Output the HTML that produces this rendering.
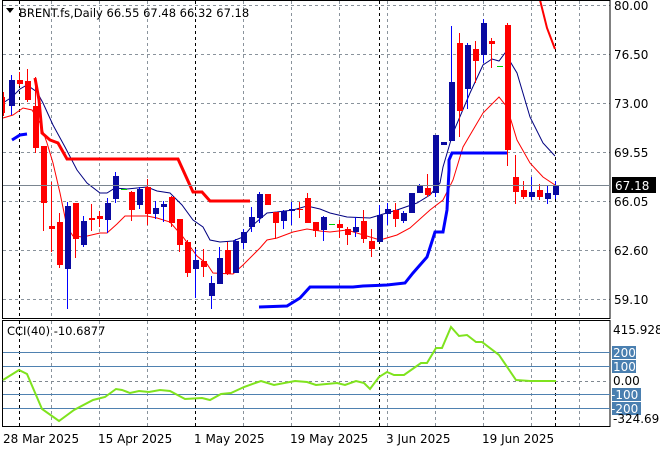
<!DOCTYPE html>
<html><head><meta charset="utf-8"><style>
html,body{margin:0;padding:0;background:#fff;}
svg{display:block;font-family:"DejaVu Sans","Liberation Sans",sans-serif;}
</style></head><body>
<svg id="s" width="660" height="450" viewBox="0 0 660 450" xmlns="http://www.w3.org/2000/svg">
<rect width="660" height="450" fill="#fff"/>
<g id="grid"></g>
<g id="lines"></g>
<g id="candles"></g>
<rect x="2.5" y="0.5" width="607.5" height="318" fill="none" stroke="#000"/>
<rect x="2.5" y="320.5" width="607.5" height="106" fill="none" stroke="#000"/>
<line x1="3" y1="185.5" x2="610" y2="185.5" stroke="#7a8590"/>
<rect x="612" y="177" width="44" height="16" fill="#000"/>
<g font-size="12" fill="#000">
<text x="614" y="10">80.00</text>
<text x="614" y="59">76.50</text>
<text x="614" y="108">73.00</text>
<text x="614" y="157">69.55</text>
<text x="615" y="190" fill="#fff">67.18</text>
<text x="614" y="206">66.05</text>
<text x="614" y="255">62.60</text>
<text x="614" y="304">59.10</text>
</g>
<g stroke="#4f81b0">
<line x1="3" y1="352.5" x2="610" y2="352.5"/>
<line x1="3" y1="366.5" x2="610" y2="366.5"/>
<line x1="3" y1="394.5" x2="610" y2="394.5"/>
<line x1="3" y1="408.5" x2="610" y2="408.5"/>
</g>
<line x1="3" y1="381.5" x2="610" y2="381.5" stroke="#808890" stroke-dasharray="3,3"/>
<g fill="#4a7fb0">
<rect x="612" y="346" width="24" height="13"/>
<rect x="612" y="360" width="24" height="13"/>
<rect x="612" y="388" width="29" height="13"/>
<rect x="612" y="402" width="29" height="13"/>
</g>
<g font-size="12" fill="#fff">
<text x="613" y="357">200</text>
<text x="613" y="371">100</text>
<text x="611" y="399">-100</text>
<text x="611" y="413">-200</text>
</g>
<g font-size="12" fill="#000">
<text x="613" y="334">415.928</text>
<text x="613" y="385">0.00</text>
<text x="613" y="423">-324.690</text>
<text x="7" y="335" font-size="11.5">CCI(40) -10.6877</text>
</g>
<polyline fill="none" stroke="#7fe31e" stroke-width="2" points="3,380 19,370 27,374 42,409 59,421 74,410 93,400 105,397 116,389 122,390 130,393 139,391 149,392 160,390 170,391 185,399 202,398 210,400 221,394 231,393 244,387 261,381 274,385 295,381 307,382 316,385 337,383 345,385 356,381 364,383 370,389 379,377 387,372 394,375 404,375 421,363 427,363 436,348 442,348 451,327 459,336 467,335 476,342 482,342 499,355 516,380 530,381 556,381"/>
<g font-size="12" fill="#000">
<text x="3" y="443">28 Mar 2025</text>
<text x="98" y="443">15 Apr 2025</text>
<text x="194" y="443">1 May 2025</text>
<text x="290" y="443">19 May 2025</text>
<text x="386" y="443">3 Jun 2025</text>
<text x="482" y="443">19 Jun 2025</text>
</g>
<path d="M6,8 L14,8 L10,13 Z" fill="#000"/>
<text x="19" y="17" font-size="11.5" fill="#000">BRENT.fs,Daily  66.55 67.48 66.32 67.18</text>
</svg>
<script>
var NS="http://www.w3.org/2000/svg";
function el(p,t,a){var e=document.createElementNS(NS,t);for(var k in a)e.setAttribute(k,a[k]);document.getElementById(p).appendChild(e);return e;}
[5,54,103,152,201,250,299].forEach(function(y){el("grid","line",{x1:3,x2:610,y1:y+.5,y2:y+.5,stroke:"#8a939c","stroke-dasharray":"3,3"});});
var blk=[19,195,379,555];
for(var x=51;x<610;x+=48){if(blk.indexOf(x)<0){el("grid","line",{x1:x+.5,x2:x+.5,y1:1,y2:318,stroke:"#8a939c","stroke-dasharray":"3,3"});el("grid","line",{x1:x+.5,x2:x+.5,y1:321,y2:426,stroke:"#8a939c","stroke-dasharray":"3,3"});}}
blk.forEach(function(x){el("grid","line",{x1:x+.5,x2:x+.5,y1:1,y2:318,stroke:"#000","stroke-dasharray":"3,3"});el("grid","line",{x1:x+.5,x2:x+.5,y1:321,y2:426,stroke:"#000","stroke-dasharray":"3,3"});});
function pl(pts,c,w){el("lines","polyline",{points:pts,fill:"none",stroke:c,"stroke-width":w});}
pl("3,103 12,97 20,89 27,85 37,92 43,103 53,125 65,147 77,170 87,183 100,193 107,193 115,188 127,189 147,187 157,191 170,193 182,205 193,220 203,227 210,240 220,242 233,241 243,237 253,225 267,213 277,212 293,210 307,206 320,209 330,213 347,217 370,218 380,215 397,210 417,203 430,195 440,183 443,167 453,133 470,93 483,65 492,59 499,61 505,53 517,73 530,117 543,143 555,156","#000080",1);
pl("3,118 13,115 23,108 32,110 40,123 47,143 53,163 60,193 67,227 73,236 83,237 100,233 107,233 117,224 125,216 147,216 157,218 170,222 183,237 197,256 207,264 213,273 233,274 243,265 260,248 267,240 277,238 293,232 307,229 320,231 330,232 347,230 380,240 397,235 410,228 430,210 443,200 453,180 463,147 483,113 499,97 507,107 517,140 530,163 543,177 555,185","#ff0000",1);
pl("35,78 39,100 42,133 50,140 58,143 67,159 178,159 193,192 202,192 210,201 250,201","#ff0000",3);
pl("540,0 547,28 555,49","#ff0000",2);
pl("12,140 20,135 27,134","#0000ff",3);
pl("259,307 287,306 300,298 310,287 353,287 363,286 387,285 405,283 413,273 427,257 435,232 443,232 447,210 449,170 449,160 452,153 507,153","#0000ff",3);
var C=[["r",80,84,72,86],["r",81,100,69,102],["r",106,148,77,153],["r",146,203,146,231],["r",226,229,182,252],["r",222,265,213,268],["b",206,269,202,309],["r",203,239,203,258],["b",221,245,216,247],["r",218,220,204,231],["r",216,219,211,227],["b",203,220,198,233],["b",176,199,172,203],["g",189,190,189,190],["r",192,210,191,221],["b",189,205,187,209],["r",187,214,179,225],["b",208,214,201,219],["b",204,207,201,222],["r",197,223,196,227],["r",219,245,219,252],["r",242,273,240,277],["b",260,269,249,298],["r",261,267,249,277],["b",283,296,276,309],["b",258,284,247,284],["r",250,274,242,275],["b",241,273,239,273],["b",232,243,229,249],["b",217,227,207,232],["b",194,218,192,223],["r",194,205,194,205],["r",212,223,212,239],["b",211,221,210,229],["b",209,211,202,225],["r",209,210,202,218],["r",198,223,193,223],["r",222,231,222,237],["b",217,230,216,241],["g",224,225,224,225],["r",224,228,220,238],["r",229,235,227,245],["b",227,232,217,237],["r",221,239,210,243],["r",241,249,229,257],["b",215,242,205,242],["b",209,214,203,225],["r",210,219,203,227],["b",213,221,211,223],["b",193,213,193,213],["b",186,193,184,193],["r",188,195,174,197],["b",135,193,135,197],["b",142,145,142,145],["b",82,141,26,141],["r",43,111,33,137],["b",45,89,43,109],["r",49,61,41,83],["b",23,55,19,63],["r",41,44,38,68],["g",66,67,66,67],["r",25,150,23,166],["r",177,192,155,204],["r",190,197,181,199],["b",192,197,177,200],["r",190,197,184,200],["b",193,199,185,204],["b",185,195,181,199]];
el("candles","line",{x1:3.5,x2:3.5,y1:92,y2:116,stroke:"#f00"});el("candles","rect",{x:2,y:97,width:3,height:16,fill:"#f00"});
el("candles","line",{x1:11.5,x2:11.5,y1:75,y2:115,stroke:"#00f"});el("candles","rect",{x:9,y:80,width:6,height:26,fill:"#0a0aa0"});
C.forEach(function(c,i){var x=19+8*i;var wc=c[0]=="r"?"#f00":(c[0]=="b"?"#00f":"#0c0");var bc=c[0]=="r"?"#f00":(c[0]=="b"?"#0a0aa0":"#0c0");
el("candles","line",{x1:x+.5,x2:x+.5,y1:c[3],y2:c[4],stroke:wc});
var h=Math.max(1,c[2]-c[1]);el("candles","rect",{x:x-2,y:c[1],width:6,height:h,fill:bc});});
</script>
</body></html>
